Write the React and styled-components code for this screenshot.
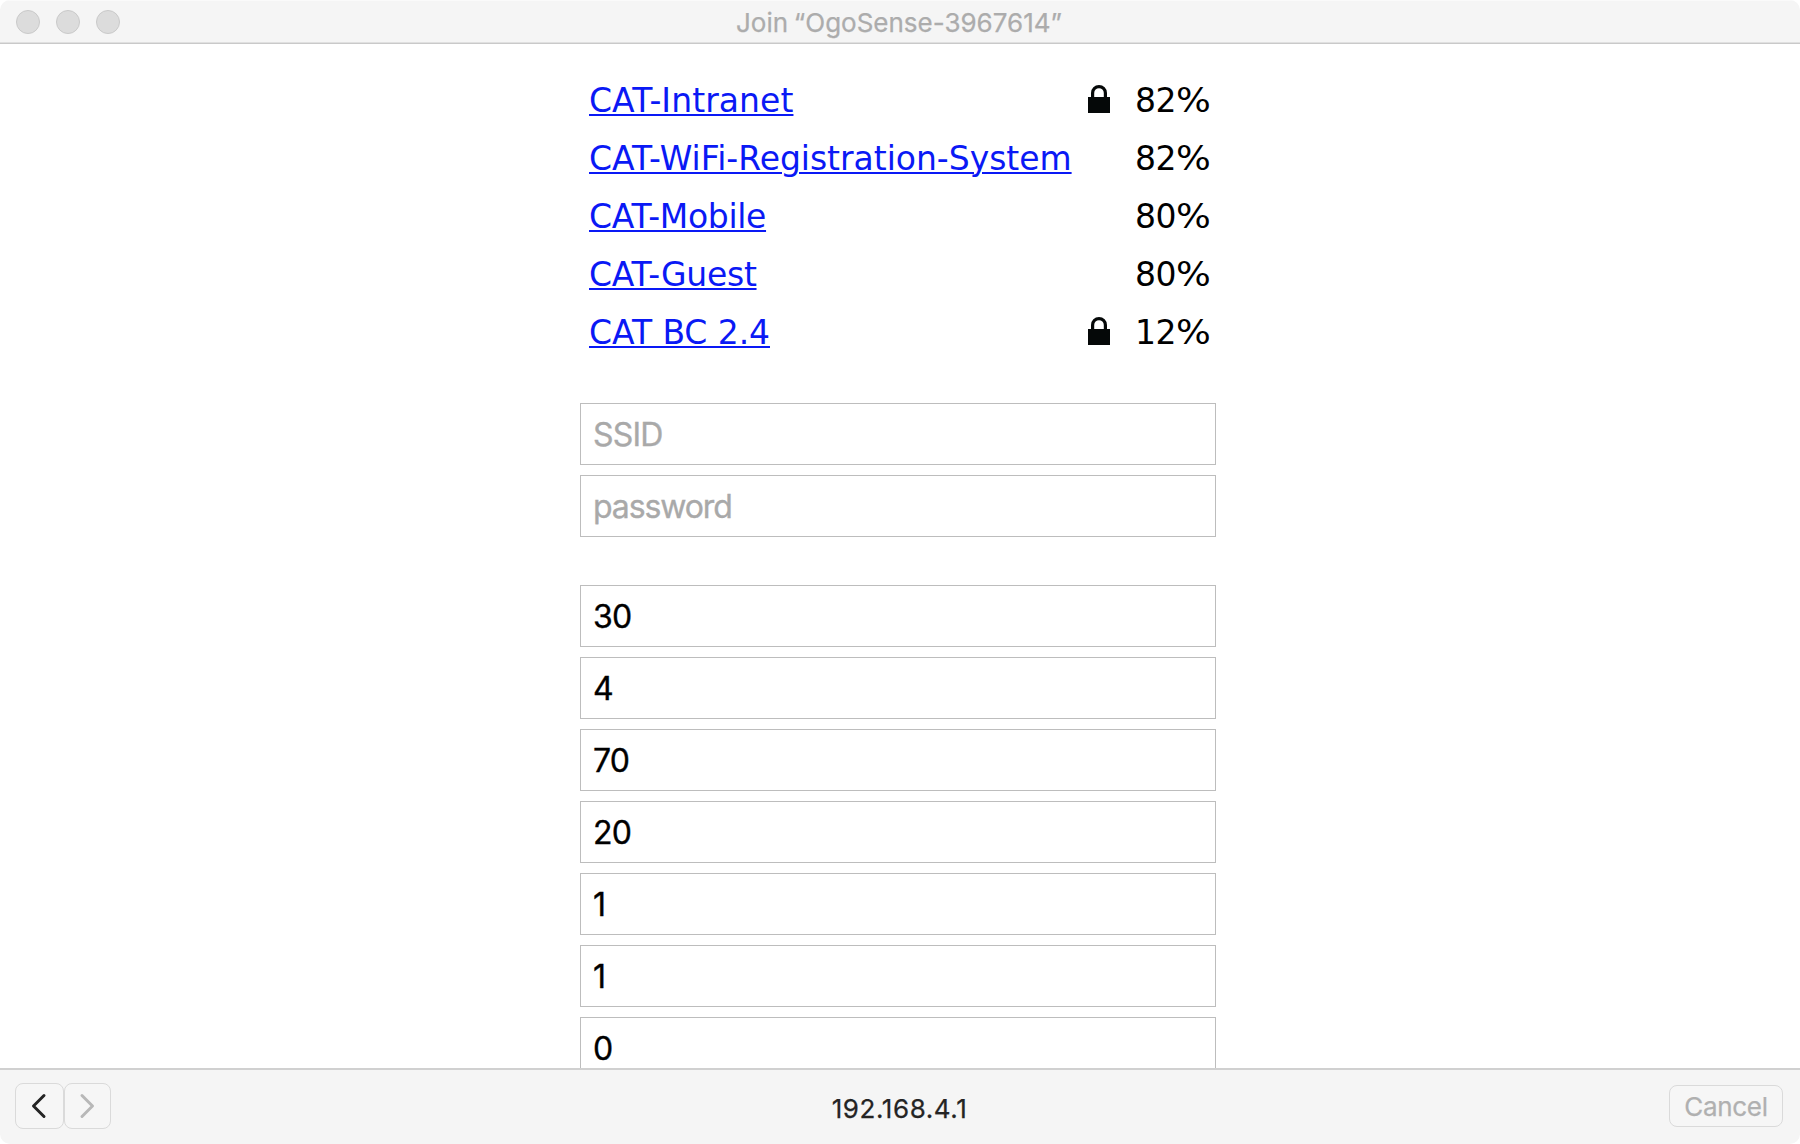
import React from 'react';
import styled, { createGlobalStyle } from 'styled-components';

const GlobalStyle = createGlobalStyle`
  * { box-sizing: border-box; }
  body { margin: 0; background: #fff; }
`;

const uiFont = 'Inter, "Liberation Sans", sans-serif';

const Window = styled.div`
  display: flex;
  flex-direction: column;
  width: 1800px;
  height: 1144px;
  overflow: hidden;
  border-radius: 10px;
  background: #fff;
`;

const TitleBar = styled.header`
  display: grid;
  grid-template-columns: 1fr auto 1fr;
  align-items: center;
  flex: none;
  height: 44px;
  padding: 0 18px 0 16px;
  background: #f5f5f5;
  border-top: 1px solid #fafafa;
  border-bottom: 1px solid #c9c9c9;
  box-shadow: inset 0 -1px 0 #e0e0e0;
`;

const TrafficLights = styled.div`
  display: flex;
  gap: 16px;
`;

const Light = styled.span`
  width: 24px;
  height: 24px;
  border: 1px solid #c9c9c9;
  border-radius: 50%;
  background: #dcdcdc;
`;

const Title = styled.h1`
  margin: 0;
  padding-top: 1px;
  font: 400 26px/32px ${uiFont};
  -webkit-text-stroke: 0.25px;
  word-spacing: -1.6px;
  color: #acacac;
  white-space: pre;
`;

const Page = styled.main`
  flex: 1;
  min-height: 0;
  overflow: hidden;
  padding: 28px 0 0 580px;
`;

const Content = styled.div`
  width: 636px;
`;

const NetworkRow = styled.div`
  display: grid;
  grid-template-columns: minmax(0, 1fr) 22px 76px;
  column-gap: 25px;
  align-items: center;
  height: 58px;
  padding: 0 5px 0 9px;
  font: 33px/58px "DejaVu Sans", Verdana, sans-serif;
  color: #000;
`;

const NetworkLink = styled.a`
  justify-self: start;
  white-space: nowrap;
  letter-spacing: ${(p) => p.$tracking}px;
  color: #0a19f5;
  text-decoration: underline;
  text-decoration-thickness: 2px;
  text-underline-offset: 2px;
`;

const LockSlot = styled.span`
  display: flex;
  height: 28px;
  margin-top: -4px;
`;

const Quality = styled.span`
  white-space: nowrap;
  letter-spacing: -0.6px;
`;

const Percent = styled.span`
  display: inline-block;
  transform: scaleX(1.11);
  transform-origin: left;
`;

const Fields = styled.div`
  display: flex;
  flex-direction: column;
  gap: 10px;
  margin-top: ${(p) => p.$top}px;
`;

const Field = styled.input`
  display: block;
  width: 100%;
  height: 62px;
  margin: 0;
  padding: 1px 12px 0;
  border: 1px solid #bdbdbd;
  border-radius: 0;
  outline: none;
  background: #fff;
  font: 400 32px/39px ${uiFont};
  -webkit-text-stroke: 0.35px;
  letter-spacing: ${(p) => p.$tracking ?? -0.8}px;
  color: #000;
  &::placeholder { color: #a9a9a9; opacity: 1; }
`;

const Footer = styled.footer`
  display: grid;
  grid-template-columns: 1fr auto 1fr;
  align-items: center;
  flex: none;
  height: 76px;
  padding: 0 17px 2px 15px;
  background: #f5f5f5;
  border-top: 2px solid #d0d0d0;
`;

const NavButtons = styled.div`
  display: flex;
`;

const buttonBase = `
  display: flex;
  align-items: center;
  justify-content: center;
  padding: 0;
  border: 1px solid #dadada;
  border-radius: 8px;
  background: #f6f6f6;
`;

const NavButton = styled.button`
  ${buttonBase}
  width: ${(p) => p.$width}px;
  height: 46px;
  padding-right: 2px;
  color: ${(p) => (p.$dim ? '#b8b8b8' : '#242424')};
`;

const Address = styled.div`
  padding: 5px 0 0 1px;
  font: 400 26px/32px ${uiFont};
  -webkit-text-stroke: 0.25px;
  letter-spacing: 0.58px;
  color: #242424;
`;

const CancelButton = styled.button`
  ${buttonBase}
  justify-self: end;
  width: 114px;
  height: 42px;
  padding-top: 1px;
  font: 400 26px/32px ${uiFont};
  -webkit-text-stroke: 0.25px;
  letter-spacing: -0.3px;
  color: #b0b0b0;
`;

const LockIcon = () => (
  <svg width="22" height="28" viewBox="0 0 22 28">
    <path d="M4.6 13V8a6.4 6.4 0 0 1 12.8 0v5" fill="none" stroke="#050808" strokeWidth="3.2" />
    <rect y="12" width="22" height="16" fill="#050808" />
  </svg>
);

const Chevron = ({ points }) => (
  <svg width="16" height="26" viewBox="0 0 16 26">
    <polyline points={points} fill="none" stroke="currentColor" strokeWidth="3" strokeLinecap="round" strokeLinejoin="round" />
  </svg>
);

const networks = [
  { name: 'CAT-Intranet', quality: 82, locked: true, tracking: 0.07 },
  { name: 'CAT-WiFi-Registration-System', quality: 82, locked: false, tracking: -0.03 },
  { name: 'CAT-Mobile', quality: 80, locked: false, tracking: -0.33 },
  { name: 'CAT-Guest', quality: 80, locked: false, tracking: -0.3 },
  { name: 'CAT BC 2.4', quality: 12, locked: true, tracking: -0.08 },
];

const settings = ['30', '4', '70', '20', '1', '1', '0'];

export default function App() {
  return (
    <Window>
      <GlobalStyle />
      <TitleBar>
        <TrafficLights>
          <Light />
          <Light />
          <Light />
        </TrafficLights>
        <Title>Join “OgoSense-3967614”</Title>
      </TitleBar>
      <Page>
        <Content>
          {networks.map((n) => (
            <NetworkRow key={n.name}>
              <NetworkLink href="#" $tracking={n.tracking}>{n.name}</NetworkLink>
              <LockSlot>{n.locked && <LockIcon />}</LockSlot>
              <Quality>{n.quality}<Percent>%</Percent></Quality>
            </NetworkRow>
          ))}
          <Fields $top={41}>
            <Field placeholder="SSID" $tracking={-0.8} />
            <Field placeholder="password" $tracking={-1.1} />
          </Fields>
          <Fields $top={48}>
            {settings.map((value, i) => (
              <Field key={i} defaultValue={value} />
            ))}
          </Fields>
        </Content>
      </Page>
      <Footer>
        <NavButtons>
          <NavButton $width={49} aria-label="Back">
            <Chevron points="13,2.5 2.5,13 13,23.5" />
          </NavButton>
          <NavButton $width={47} $dim aria-label="Forward">
            <Chevron points="3,2.5 13.5,13 3,23.5" />
          </NavButton>
        </NavButtons>
        <Address>192.168.4.1</Address>
        <CancelButton>Cancel</CancelButton>
      </Footer>
    </Window>
  );
}
